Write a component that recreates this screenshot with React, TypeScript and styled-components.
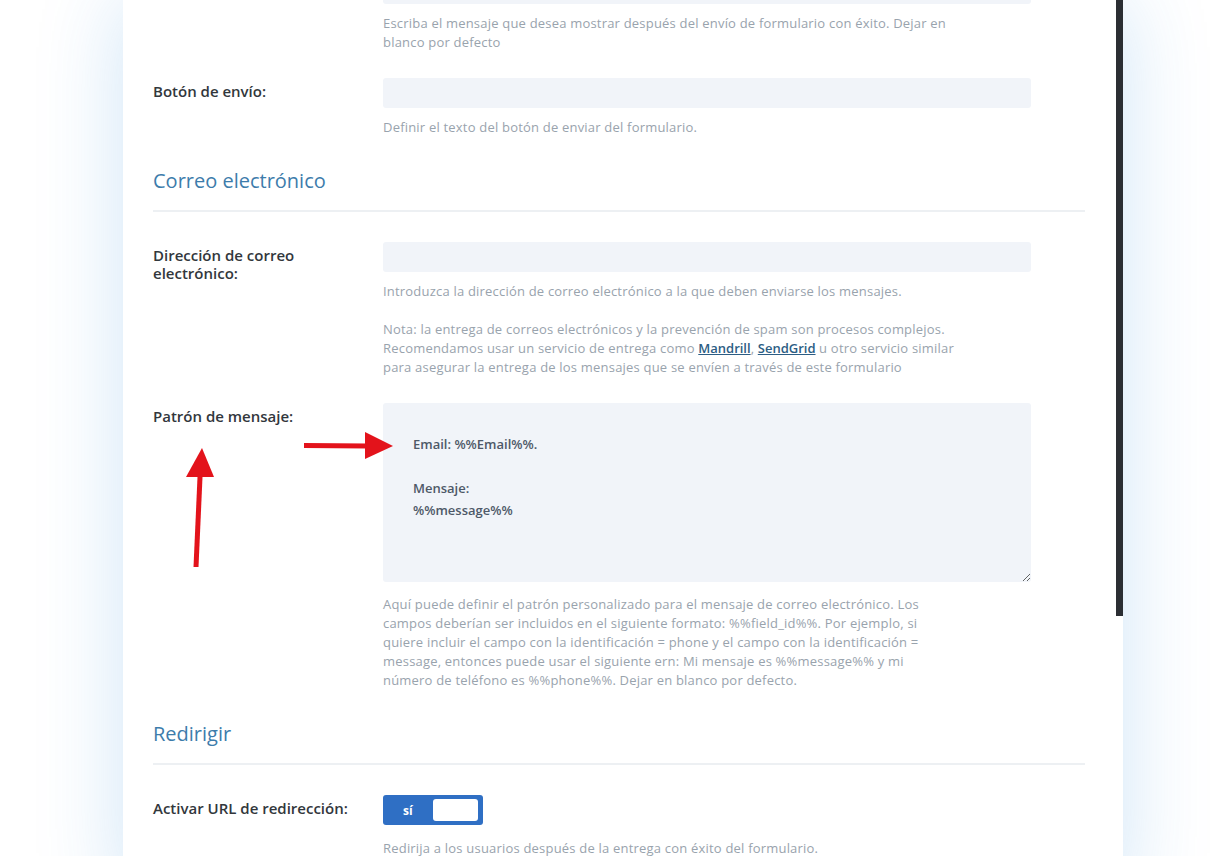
import React from "react";
import styled, { createGlobalStyle } from "styled-components";

const GlobalStyle = createGlobalStyle`
  html, body {
    margin: 0;
    padding: 0;
    background: #ffffff;
    overflow: hidden;
  }
  body {
    font-family: "Open Sans", "Liberation Sans", sans-serif;
    -webkit-font-smoothing: antialiased;
  }
  * { box-sizing: border-box; }
`;

const Page = styled.div`
  height: 856px;
  overflow: hidden;
  padding-left: 123px;
`;

const Panel = styled.div`
  width: 1000px;
  min-height: 900px;
  background: #ffffff;
  box-shadow: 0 0 80px rgba(43, 135, 218, 0.22);
  display: flex;
  align-items: flex-start;
`;

const Content = styled.div`
  flex: 1;
  margin-top: -26px;
  padding: 0 31px 0 30px;
`;

const ScrollTrack = styled.div`
  width: 7px;
  align-self: stretch;
  display: flex;
  flex-direction: column;
`;

const ScrollThumb = styled.div`
  height: 616px;
  background: #2b2e33;
`;

const Field = styled.div`
  position: relative;
  display: grid;
  grid-template-columns: 230px 648px;
  margin-bottom: 26px;
`;

const Label = styled.div`
  max-width: 200px;
  padding-top: 4px;
  font-size: 15px;
  line-height: 18px;
  font-weight: 600;
  color: #32373c;
`;

const Control = styled.div`
  display: flex;
  flex-direction: column;
`;

const Input = styled.div`
  height: 30px;
  background: #f1f4f9;
  border-radius: 3px;
`;

const Desc = styled.div<{ $gap?: number }>`
  margin-top: ${(p) => p.$gap ?? 10}px;
  width: 620px;
  font-size: 13px;
  letter-spacing: 0.2px;
  line-height: 19px;
  color: #99a3ad;
`;

const Para = styled.p`
  margin: 0;
  & + & {
    margin-top: 19px;
  }
`;

const Link = styled.a`
  color: #2c5d84;
  font-weight: 600;
  letter-spacing: 0;
  text-decoration: underline;
`;

const Heading = styled.h2`
  margin: 30px 0 30px;
  padding-bottom: 15px;
  border-bottom: 2px solid #edf0f3;
  font-size: 20px;
  line-height: 28px;
  font-weight: 400;
  color: #3d7cab;
`;

const TextArea = styled.textarea`
  display: block;
  width: 648px;
  height: 179px;
  padding: 30px;
  border: none;
  border-radius: 3px;
  background: #f1f4f9;
  resize: vertical;
  font-family: "Open Sans", "Liberation Sans", sans-serif;
  font-size: 13px;
  line-height: 22px;
  font-weight: 600;
  color: #4e5968;
  outline: none;
`;

const Toggle = styled.div`
  width: 100px;
  height: 30px;
  border-radius: 3px;
  background: #2f6fc4;
  display: flex;
  align-items: center;
  justify-content: space-between;
  padding: 0 5px 0 20px;
`;

const ToggleText = styled.span`
  color: #ffffff;
  font-size: 12px;
  font-weight: 700;
`;

const Knob = styled.span`
  width: 45px;
  height: 22px;
  border-radius: 3px;
  background: #ffffff;
`;

const Arrows = styled.svg`
  position: absolute;
  left: 0;
  top: 0;
  width: 260px;
  height: 180px;
  pointer-events: none;
`;

const RED = "#e3131b";

export default function App() {
  return (
    <>
      <GlobalStyle />
      <Page>
        <Panel>
          <Content>
            <Field>
              <div />
              <Control>
                <Input />
                <Desc>
                  Escriba el mensaje que desea mostrar después del envío de formulario con éxito. Dejar en
                  <br />
                  blanco por defecto
                </Desc>
              </Control>
            </Field>

            <Field>
              <Label>Botón de envío:</Label>
              <Control>
                <Input />
                <Desc>Definir el texto del botón de enviar del formulario.</Desc>
              </Control>
            </Field>

            <Heading>Correo electrónico</Heading>

            <Field>
              <Label>Dirección de correo electrónico:</Label>
              <Control>
                <Input />
                <Desc>
                  <Para>Introduzca la dirección de correo electrónico a la que deben enviarse los mensajes.</Para>
                  <Para>
                    Nota: la entrega de correos electrónicos y la prevención de spam son procesos complejos.
                    <br />
                    Recomendamos usar un servicio de entrega como <Link href="#">Mandrill</Link>,{" "}
                    <Link href="#">SendGrid</Link> u otro servicio similar
                    <br />
                    para asegurar la entrega de los mensajes que se envíen a través de este formulario
                  </Para>
                </Desc>
              </Control>
            </Field>

            <Field>
              <Label>Patrón de mensaje:</Label>
              <Control>
                <TextArea
                  readOnly
                  defaultValue={"Email: %%Email%%.\n\nMensaje:\n%%message%%"}
                />
                <Desc $gap={13}>
                  Aquí puede definir el patrón personalizado para el mensaje de correo electrónico. Los
                  <br />
                  campos deberían ser incluidos en el siguiente formato: %%field_id%%. Por ejemplo, si
                  <br />
                  quiere incluir el campo con la identificación = phone y el campo con la identificación =
                  <br />
                  message, entonces puede usar el siguiente ern: Mi mensaje es %%message%% y mi
                  <br />
                  número de teléfono es %%phone%%. Dejar en blanco por defecto.
                </Desc>
              </Control>
              <Arrows viewBox="0 0 260 180">
                <polygon points="151,40 214,40.5 214,45.5 151,45" fill={RED} />
                <polygon points="212,29 240,43 212,56" fill={RED} />
                <polygon points="44.5,74 49.5,74 45.5,164 40.5,164" fill={RED} />
                <polygon points="49,45 61,74 33,74" fill={RED} />
              </Arrows>
            </Field>

            <Heading>Redirigir</Heading>

            <Field>
              <Label>Activar URL de redirección:</Label>
              <Control>
                <Toggle>
                  <ToggleText>sí</ToggleText>
                  <Knob />
                </Toggle>
                <Desc $gap={14}>
                  Redirija a los usuarios después de la entrega con éxito del formulario.
                </Desc>
              </Control>
            </Field>
          </Content>
          <ScrollTrack>
            <ScrollThumb />
          </ScrollTrack>
        </Panel>
      </Page>
    </>
  );
}
